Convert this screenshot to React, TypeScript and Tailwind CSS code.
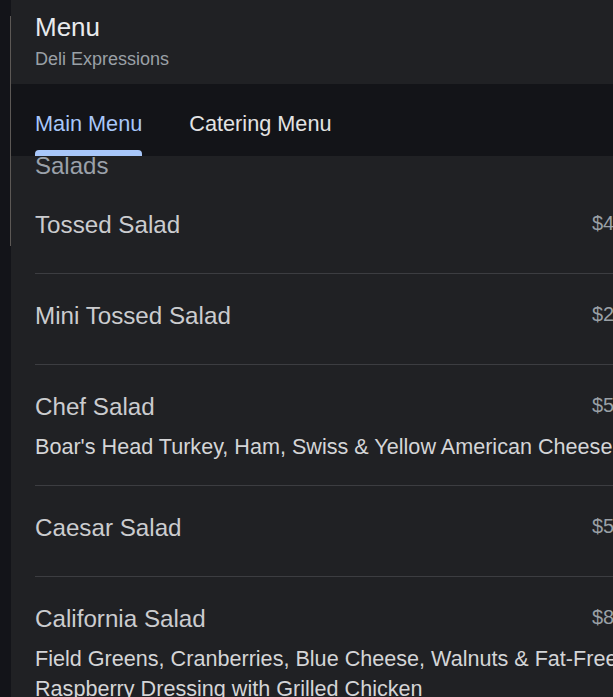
import React from "react";

type Item = { name: string; price: string; desc?: string };

const items: Item[] = [
  { name: "Tossed Salad", price: "$4.25" },
  { name: "Mini Tossed Salad", price: "$2.75" },
  {
    name: "Chef Salad",
    price: "$5.95",
    desc: "Boar's Head Turkey, Ham, Swiss & Yellow American Cheese",
  },
  { name: "Caesar Salad", price: "$5.95" },
  {
    name: "California Salad",
    price: "$8.95",
    desc: "Field Greens, Cranberries, Blue Cheese, Walnuts & Fat-Free Raspberry Dressing with Grilled Chicken",
  },
];

export default function App() {
  return (
    <div
      className="flex w-[613px] h-[697px] overflow-hidden bg-[#131418]"
      style={{ fontFamily: '"Liberation Sans", Arial, sans-serif' }}
    >
      <div className="w-[11px] shrink-0 flex flex-col bg-[#131419]">
        <div className="ml-[10px] mt-[16px] h-[230px] w-px bg-[#5c5855]" />
      </div>
      <div className="w-[655px] shrink-0 flex flex-col bg-[#202124]">
        <header className="h-[84px] shrink-0 px-[24px] pt-[11px] bg-[#202124]">
          <div className="text-[26px] leading-[32px] text-[#e8eaed]">Menu</div>
          <div className="mt-[4px] text-[18px] leading-[24px] text-[#9aa0a6]">
            Deli Expressions
          </div>
        </header>
        <nav className="h-[72px] shrink-0 bg-[#131418] px-[24px] flex gap-[47px] relative z-10">
          <div className="flex flex-col justify-end">
            <div className="text-[21.7px] leading-[28px] text-[#a8c7fa]">Main Menu</div>
            <div className="mt-[12px] h-[6px] rounded-t-[4px] bg-[#a8c7fa]" />
          </div>
          <div className="flex flex-col justify-end">
            <div className="text-[21.7px] leading-[28px] text-[#e3e3e3]">Catering Menu</div>
            <div className="mt-[12px] h-[6px]" />
          </div>
        </nav>
        <main className="flex-1 overflow-hidden px-[24px]">
          <h2 className="-mt-[6px] text-[24px] leading-[32px] text-[#9ba1aa]">Salads</h2>
          <div className="mt-[27px]">
            {items.map((it, i) => (
              <div
                key={it.name}
                className={
                  i === 0
                    ? "pb-[23px]"
                    : "pt-[26px] pb-[23px] border-t border-[#3c3d41]"
                }
              >
                <div className="flex items-start justify-between mb-[9px]">
                  <div className="text-[24.2px] leading-[32px] text-[#cbcccf]">{it.name}</div>
                  <div className="text-[20px] leading-[28px] text-[#9aa0a6]">{it.price}</div>
                </div>
                {it.desc && (
                  <div className="text-[21.6px] leading-[30px] text-[#d4d5d7]">{it.desc}</div>
                )}
              </div>
            ))}
          </div>
        </main>
      </div>
    </div>
  );
}
